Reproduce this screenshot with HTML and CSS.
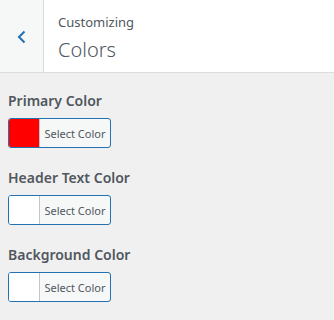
FILE: index.html
```html
<!DOCTYPE html>
<html lang="en">

<head>
  <meta charset="UTF-8">
  <meta name="viewport" content="width=device-width, initial-scale=1.0">
  <title>Customizing - Colors</title>
  <link rel="stylesheet" href="styles.css">
</head>

<body>
  <header class="panel-head">
    <button class="back" aria-label="Back">
      <svg width="12" height="16" viewBox="0 0 12 16">
        <path d="M8.5 2.5 L3 8 L8.5 13.5" fill="none" stroke="#2271b1" stroke-width="2" />
      </svg>
    </button>
    <div class="title">
      <span class="crumb">Customizing</span>
      <h1>Colors</h1>
    </div>
  </header>

  <div class="controls">
    <div class="control">
      <span class="label">Primary Color</span>
      <button class="picker">
        <span class="swatch" style="background: #ff0000;"></span>
        <span class="picker-text">Select Color</span>
      </button>
    </div>
    <div class="control">
      <span class="label">Header Text Color</span>
      <button class="picker">
        <span class="swatch"></span>
        <span class="picker-text">Select Color</span>
      </button>
    </div>
    <div class="control">
      <span class="label">Background Color</span>
      <button class="picker">
        <span class="swatch"></span>
        <span class="picker-text">Select Color</span>
      </button>
    </div>
  </div>
</body>

</html>
```

FILE: styles.css
```css
body {
  font-family: 'Noto Sans', 'Open Sans', sans-serif;
  background-color: #f0f0f1;
  color: #1d2327;
  margin: 0;
  padding: 0;
}

.panel-head {
  display: flex;
  height: 72px;
  background-color: #fff;
  border-bottom: 1px solid #dcdcde;
}

.back {
  width: 44px;
  display: flex;
  align-items: center;
  justify-content: center;
  padding: 2px 0 0;
  background-color: #f6f7f7;
  border: none;
  border-right: 1px solid #dcdcde;
}

.title {
  padding: 12px 0 0 14px;
  display: flex;
  flex-direction: column;
}

.crumb {
  font-size: 13px;
  color: #50575e;
  line-height: 20px;
}

h1 {
  margin: 4px 0 0;
  font-size: 20px;
  font-weight: 300;
  color: #50575e;
  line-height: 28px;
}

.controls {
  display: flex;
  flex-direction: column;
  padding: 18px 8px 0;
  gap: 20px;
}

.control {
  display: flex;
  flex-direction: column;
  align-items: flex-start;
  gap: 7px;
}

.label {
  font-size: 14px;
  font-weight: 600;
  color: #50575e;
  line-height: 20px;
}

.picker {
  display: flex;
  align-items: stretch;
  width: 103px;
  height: 30px;
  padding: 0;
  border: 1px solid #2271b1;
  border-radius: 3px;
  background-color: #f6f7f7;
  overflow: hidden;
}

.swatch {
  width: 30px;
  background-color: #fff;
  border-right: 1px solid #c3c4c7;
}

.picker-text {
  flex: 1;
  display: flex;
  align-items: center;
  justify-content: center;
  font-family: 'Noto Sans', sans-serif;
  font-size: 11px;
  color: #50575e;
}
```
